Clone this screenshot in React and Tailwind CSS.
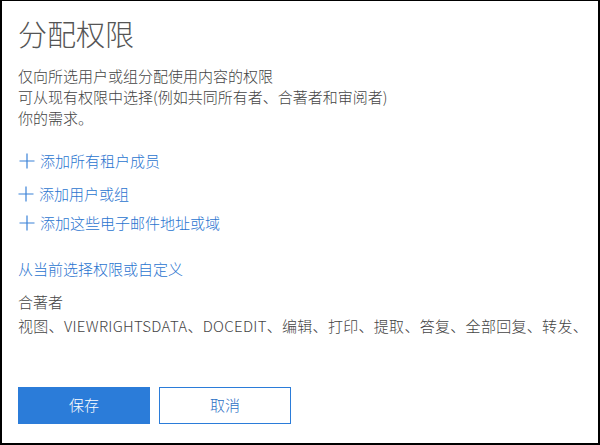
const FONT = '"Noto Sans CJK SC", "Noto Sans", sans-serif';

function Plus() {
  return (
    <svg width="16" height="16" viewBox="0 0 16 16" className="shrink-0">
      <path d="M8 0.5V15.5M0.5 8H15.5" stroke="#3b82d8" strokeWidth="1.2" fill="none" />
    </svg>
  );
}

function AddLink({ label, className }) {
  return (
    <div className={`flex items-center h-[21px] ${className}`}>
      <Plus />
      <span className="ml-[5px] text-[15px] leading-[21px] font-light text-[#2a74cf]">{label}</span>
    </div>
  );
}

export default function App() {
  return (
    <div
      className="w-[600px] h-[445px] bg-white border-t border-l-2 border-r-2 border-b-2 border-black flex flex-col pl-[16px]"
      style={{ fontFamily: FONT }}
    >
      <h1 className="mt-[14px] text-[29px] leading-[36px] font-light text-[#555]">分配权限</h1>

      <div className="mt-[14px] text-[15px] leading-[21px] font-light text-[#444]">
        <p>仅向所选用户或组分配使用内容的权限</p>
        <p>可从现有权限中选择(例如共同所有者、合著者和审阅者)</p>
        <p>你的需求。</p>
      </div>

      <AddLink className="mt-[22px] pl-[1px]" label="添加所有租户成员" />
      <AddLink className="mt-[12px]" label="添加用户或组" />
      <AddLink className="mt-[8px] pl-[1px]" label="添加这些电子邮件地址或域" />

      <div className="mt-[25px] text-[15px] leading-[21px] font-light text-[#2a74cf]">从当前选择权限或自定义</div>

      <div className="mt-[12px] text-[15px] leading-[21px] font-light text-[#444]">合著者</div>
      <div className="mt-[3px] text-[15px] leading-[21px] font-light text-[#444] whitespace-nowrap overflow-hidden tracking-[0.3px]">
        视图、VIEWRIGHTSDATA、DOCEDIT、编辑、打印、提取、答复、全部回复、转发、
      </div>

      <div className="mt-[51px] flex gap-[9px]">
        <button className="w-[132px] h-[37px] bg-[#2b7cd9] text-white text-[15px] font-light">保存</button>
        <button className="w-[132px] h-[37px] bg-white border border-[#2b7cd9] text-[#2b6fc4] text-[15px] font-light">取消</button>
      </div>
    </div>
  );
}
